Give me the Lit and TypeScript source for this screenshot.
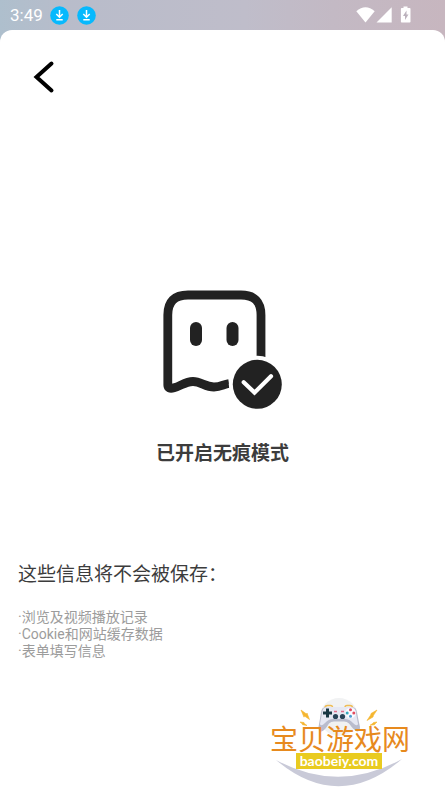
import { LitElement, html, css, svg } from "lit";
import { customElement, property } from "lit/decorators.js";

const CJK = css`"Noto Sans CJK SC", sans-serif`;

@customElement("status-bar")
class StatusBar extends LitElement {
  static styles = css`
    :host {
      display: flex;
      align-items: center;
      box-sizing: border-box;
      height: 30px;
      padding: 0 34px 0 10px;
      color: #fff;
      font: 400 17px/20px Roboto, sans-serif;
    }
    .time {
      margin-right: 7px;
    }
    .badge {
      width: 19px;
      height: 19px;
      margin-right: 8px;
    }
    .system {
      margin-left: auto;
      width: 55px;
      height: 18px;
    }
  `;

  private badge() {
    return svg`<svg class="badge" viewBox="0 0 19 19" aria-hidden="true">
      <circle cx="9.5" cy="9.5" r="9.3" fill="#07b9fd" />
      <path d="M9.5 4v7M6.3 8l3.2 3.2L12.7 8M6.3 13.7h6.4" fill="none" stroke="#fff" stroke-width="1.5" />
    </svg>`;
  }

  render() {
    return html`
      <span class="time">3:49</span>
      ${this.badge()}${this.badge()}
      <svg class="system" viewBox="0 0 55 18" fill="#fff" aria-hidden="true">
        <path d="M.3 5.2Q9.5-2.6 18.7 5.2L9.5 16.5z" />
        <path d="M35.7 1.2v15.2H20.5z" />
        <path d="M47.5.5h4V2h2.2q.8 0 .8.8v12.9q0 .8-.8.8h-8q-.8 0-.8-.8V2.8q0-.8.8-.8h1.8z" />
        <path d="M50.5 4.5v4h2L49 14v-4h-2z" fill="#bcb2bd" />
      </svg>
    `;
  }
}

@customElement("ghost-icon")
class GhostIcon extends LitElement {
  static styles = css`
    :host,
    svg {
      display: block;
      width: 120px;
      height: 120px;
    }
  `;

  render() {
    return html`<svg viewBox="163 290 120 120" aria-hidden="true">
      <path
        d="M261 357V315Q261 295 241 295H188Q167.8 295 167.8 315V385Q167.8 389.5 174 387.8C181 386 185 381.5 193 381.5C201 381.5 205 387 214 387C221 387 223 384.5 229 383.5"
        fill="none"
        stroke="#222"
        stroke-width="8.8"
      />
      <rect x="190" y="322" width="12" height="24" rx="6" fill="#222" />
      <rect x="226.5" y="322" width="12" height="24" rx="6" fill="#222" />
      <circle cx="257.3" cy="384.3" r="28.5" fill="#fff" />
      <circle cx="257.3" cy="384.3" r="24.5" fill="#222" />
      <path d="M243.7 382.3L254.5 392.6L271 376.2" fill="none" stroke="#fff" stroke-width="4.2" stroke-linecap="round" />
    </svg>`;
  }
}

@customElement("site-logo")
class SiteLogo extends LitElement {
  static styles = css`
    :host,
    svg {
      display: block;
      width: 170px;
      height: 100px;
    }
    .name {
      font: 400 28px ${CJK};
      fill: #e78a1e;
    }
    .domain {
      font: 700 14px Lato, sans-serif;
      fill: #fff;
    }
  `;

  render() {
    return html`<svg viewBox="260 691 170 100">
      <circle cx="339" cy="717" r="19" fill="#f1f2f3" />
      <path d="M276 760Q339 794 402 759Q339 813 276 760z" fill="#c9cad8" />
      <path d="M325 708q0-2.5 2.5-2.5h3q2 0 2 2M345 707.5q0-2 2-2h3q2.5 0 2.5 2.5" fill="none" stroke="#efbd55" stroke-width="1.5" />
      <path d="M326 707H352Q356.5 707 357 713L360 727Q360 731.5 357 731.5Q354.5 731 349 723.5Q347 721.5 344 721.5H334Q331 721.5 329 723.5Q324.5 731 321.5 731.5Q318.5 731.5 318.5 727L321 713Q321.5 707 326 707z" fill="#b9bccd" />
      <path d="M327 707H351Q355.5 707 356 713L358 724Q357 727 353 723Q349 718.5 344 719H334Q329 718.5 325 723Q321 727 320 724L322 713Q322.5 707 327 707z" fill="#e6e8f3" />
      <path d="M326 708.5h3v3h3v3h-3v3h-3v-3h-3v-3h3z" fill="#183743" />
      <circle cx="335.5" cy="716.5" r="2.6" fill="#294458" />
      <circle cx="342.5" cy="716.5" r="2.6" fill="#294458" />
      <path d="M334 711.5h3M341 711.5h3" stroke="#df6f8c" stroke-width="1.3" />
      <circle cx="350.5" cy="713" r="5.3" fill="#fafbff" />
      <circle cx="350.5" cy="709.7" r="1.5" fill="#e34d60" />
      <circle cx="350.5" cy="716.3" r="1.5" fill="#4d9dd1" />
      <circle cx="347.2" cy="713" r="1.5" fill="#37a8bd" />
      <circle cx="353.8" cy="713" r="1.5" fill="#e34d60" />
      <path
        d="M301 710l5.5 4 .5-1 2.5 6.5-5-3.5-.5 1.2zM377 710l-6 3.5-.3 1.5-3.7 5.5 6-3.5.5-1.7zM300 722l4 .5.3 1L307 725.5l-4.5-.8-.3-.9zM377 722l-3.5.5-.5.8-3 2 4.5-.6.5-.8z"
        fill="#f5b62f"
        stroke="#f5b62f"
        stroke-width=".6"
      />
      <text class="name" x="270" y="750">宝贝游戏网</text>
      <rect x="296" y="753" width="86" height="16" fill="#e9cb20" />
      <text class="domain" x="339" y="766" text-anchor="middle">baobeiy.com</text>
    </svg>`;
  }
}

@customElement("app-root")
class AppRoot extends LitElement {
  @property({ attribute: false }) items = [
    "浏览及视频播放记录",
    "Cookie和网站缓存数据",
    "表单填写信息",
  ];

  static styles = css`
    :host {
      display: flex;
      flex-direction: column;
      min-height: 100vh;
      background: linear-gradient(90deg, #aebfcd 0, #b8bcca 15%, #bfbdca 55%, #c3b9c4 75%, #c7b6bf 100%)
        top / 100% 60px no-repeat #fff;
      font-family: Roboto, ${CJK};
    }
    .sheet {
      flex: 1;
      display: flex;
      flex-direction: column;
      background: #fff;
      border-radius: 12px 12px 0 0;
    }
    .back {
      align-self: flex-start;
      width: 32px;
      height: 40px;
      margin: 27px 0 0 28px;
      padding: 0;
      border: 0;
      background: none;
    }
    .back svg {
      display: block;
      width: 32px;
      height: 40px;
    }
    .state {
      display: flex;
      flex-direction: column;
      align-items: center;
      margin-top: 193px;
    }
    .title {
      margin: 28px 0 0;
      font: 700 19px/28px ${CJK};
      color: #3c3c3c;
    }
    .info {
      padding: 0 18px;
      margin-top: 93px;
    }
    .heading {
      margin: 0;
      font: 400 19px/28px ${CJK};
      color: #3c3c3c;
    }
    .list {
      margin: 22px 0 0;
      padding: 0;
      list-style: none;
      font-size: 14px;
      line-height: 17px;
      color: #9c9c9c;
    }
    .logo {
      align-self: flex-end;
      margin: auto 15px 0 0;
    }
  `;

  render() {
    return html`
      <status-bar></status-bar>
      <main class="sheet" lang="zh-CN">
        <button class="back" aria-label="返回">
          <svg viewBox="28 57 32 40" fill="none" stroke="#000" stroke-width="4" stroke-linecap="round">
            <path d="M51.5 63.5L36.5 77L51.5 90.5" />
          </svg>
        </button>
        <section class="state">
          <ghost-icon></ghost-icon>
          <h1 class="title">已开启无痕模式</h1>
        </section>
        <section class="info">
          <h2 class="heading">这些信息将不会被保存：</h2>
          <ul class="list">
            ${this.items.map((item) => html`<li>·${item}</li>`)}
          </ul>
        </section>
        <site-logo class="logo"></site-logo>
      </main>
    `;
  }
}
